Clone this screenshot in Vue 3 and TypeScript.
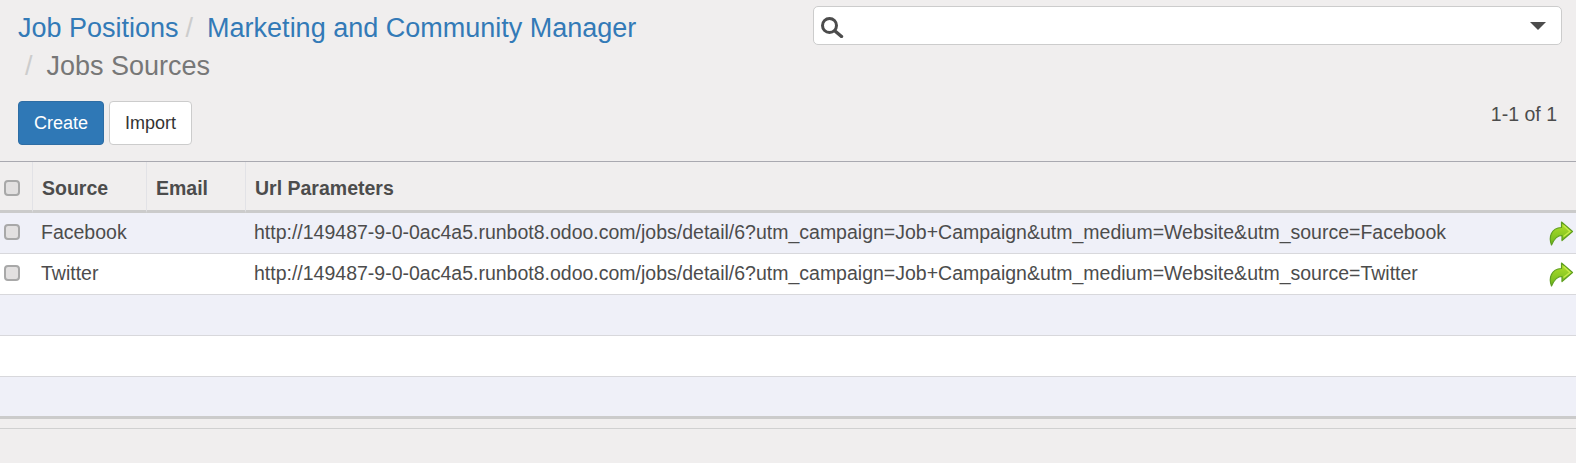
<script setup lang="ts">
interface Row { source: string; url: string }
const base = 'http://149487-9-0-0ac4a5.runbot8.odoo.com/jobs/detail/6?utm_campaign=Job+Campaign&utm_medium=Website&utm_source='
const rows: Row[] = [
  { source: 'Facebook', url: base + 'Facebook' },
  { source: 'Twitter', url: base + 'Twitter' },
]
</script>

<template>
  <div class="page">
    <header class="panel">
      <div class="left">
        <ol class="crumbs">
          <li class="link">Job Positions</li>
          <li class="link sep">Marketing and Community Manager</li>
          <li class="active sep">Jobs Sources</li>
        </ol>
        <div class="buttons">
          <button class="btn primary">Create</button>
          <button class="btn">Import</button>
        </div>
      </div>
      <div class="right">
        <div class="search">
          <svg class="mag" width="23" height="21" viewBox="0 0 23 21">
            <circle cx="8.5" cy="8.5" r="7" fill="none" stroke="#4c4c4c" stroke-width="3" />
            <path d="M14 14l6.5 5.5" stroke="#4c4c4c" stroke-width="3.4" stroke-linecap="round" />
          </svg>
          <span class="caret"></span>
        </div>
        <div class="pager">1-1 of 1</div>
      </div>
    </header>

    <table class="list">
      <colgroup>
        <col class="c1" /><col class="c2" /><col class="c3" /><col /><col class="c5" />
      </colgroup>
      <thead>
        <tr>
          <th class="chk"><span class="box"></span></th>
          <th>Source</th>
          <th>Email</th>
          <th>Url Parameters</th>
          <th class="none"></th>
        </tr>
      </thead>
      <tbody>
        <tr v-for="r in rows" :key="r.source">
          <td class="chk"><span class="box"></span></td>
          <td>{{ r.source }}</td>
          <td></td>
          <td class="url">{{ r.url }}</td>
          <td class="act">
            <svg width="26" height="26" viewBox="0 0 26 26">
              <defs>
                <linearGradient id="arrowFill" x1="0" y1="0" x2="0" y2="1">
                  <stop offset="0" stop-color="#b4e02c" />
                  <stop offset="1" stop-color="#6cb81c" />
                </linearGradient>
              </defs>
              <path d="M13.5 2L24.5 11.5 14 20.5V15.5C9 15.5 6 19 3.5 25 0.5 17 3 8 13.5 7.5Z" fill="url(#arrowFill)" stroke="#5f9f20" stroke-width="1.2" stroke-linejoin="round" />
              <path d="M15.5 5.5L22 11.5 15.5 16.5" stroke="#c8ea48" stroke-width="1.4" fill="none" />
            </svg>
          </td>
        </tr>
        <tr v-for="n in 3" :key="n" class="empty">
          <td colspan="5"></td>
        </tr>
      </tbody>
    </table>
    <div class="foot"></div>
  </div>
</template>

<style>
html, body { margin: 0; background: #f0eeee; }
</style>

<style scoped>
.page {
  width: 1576px;
  height: 463px;
  overflow: hidden;
  background: #f0eeee;
  font-family: "Liberation Sans", Arial, sans-serif;
  color: #4c4c4c;
  font-size: 19.5px;
}
.panel {
  display: flex;
  justify-content: space-between;
  height: 162px;
  box-sizing: border-box;
  border-bottom: 1px solid #a9a9b0;
  padding: 0 18px;
}
.left { width: 650px; }
.crumbs {
  margin: 0;
  padding: 9px 0 0;
  list-style: none;
  font-size: 27px;
  line-height: 38px;
  height: 92px;
}
.crumbs li { display: inline-block; }
.link { color: #337ab7; }
.active { color: #777; }
.sep::before {
  content: "/";
  color: #ccc;
  padding: 0 14px 0 7px;
}
.buttons { display: flex; gap: 5px; }
.btn {
  height: 44px;
  padding: 0 15px;
  border: 1px solid #ccc;
  border-radius: 4px;
  background: #fff;
  color: #333;
  font: 18px "Liberation Sans", Arial, sans-serif;
}
.primary {
  background: #2f78b6;
  border-color: #2e6da4;
  color: #fff;
}
.right { width: 749px; margin-right: -4px; padding-top: 6px; box-sizing: border-box; }
.search {
  height: 39px;
  box-sizing: border-box;
  border: 1px solid #ccc;
  border-radius: 5px;
  background: #fff;
  display: flex;
  align-items: center;
  justify-content: space-between;
  padding: 0 15px 0 7px;
}
.mag { display: block; margin-top: 4px; }
.caret {
  width: 0;
  height: 0;
  border-left: 8px solid transparent;
  border-right: 8px solid transparent;
  border-top: 8px solid #4c4c4c;
}
.pager {
  margin-top: 57px;
  padding-right: 5px;
  text-align: right;
  font-size: 19.5px;
  line-height: 24px;
}
.list {
  width: 1576px;
  border-collapse: separate;
  border-spacing: 0;
  table-layout: fixed;
}
.c1 { width: 32px; }
.c2 { width: 114px; }
.c3 { width: 99px; }
.c5 { width: 46px; }
th {
  height: 51px;
  padding: 5px 9px 0;
  box-sizing: border-box;
  text-align: left;
  font-weight: 700;
  font-size: 19.5px;
  border-bottom: 3px solid #cbcbcb;
  border-left: 1px solid #e2e2e6;
}
th.chk, th.none { border-left: 0; }
td {
  height: 41px;
  padding: 0 9px 2px;
  box-sizing: border-box;
  border-bottom: 1px solid #d8d8dc;
  white-space: nowrap;
  background: #fff;
}
tbody tr:nth-child(odd) td { background: #eff0f8; }
th.chk { padding: 3px 0 0 4px; }
td.chk { padding: 0 0 3px 4px; }
.box {
  display: block;
  width: 16px;
  height: 16px;
  box-sizing: border-box;
  border: 2px solid #a8a8a8;
  border-radius: 4px;
  background: #e2e0e0;
}
.act { padding: 0 2px 0 0; overflow: visible; text-align: right; }
.act svg { display: block; margin-left: auto; margin-bottom: 1px; }
.empty td { height: 41px; }
.empty:last-child td { height: 39px; border-bottom: 0; }
.foot {
  height: 9px;
  border-top: 3px solid #cbcbcb;
  border-bottom: 1px solid #d0d0d0;
}
</style>
